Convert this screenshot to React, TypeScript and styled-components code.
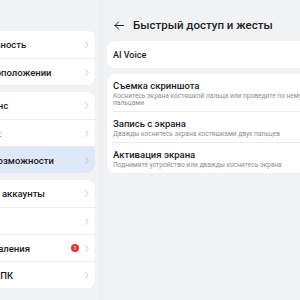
import styled, { createGlobalStyle } from 'styled-components'

interface NavItem {
  label: string
  badge?: number
  active?: boolean
}

interface GestureItem {
  title: string
  hint: string
}

const navGroups: NavItem[][] = [
  [{ label: 'Конфиденциальность' }, { label: 'Данные о местоположении' }],
  [
    { label: 'Цифровой баланс' },
    { label: 'Google Assistant' },
    { label: 'Специальные возможности', active: true },
  ],
  [
    { label: 'Пользователи и аккаунты' },
    { label: 'Google' },
    { label: 'Система и обновления', badge: 1 },
    { label: 'Подключение к ПК' },
  ],
]

const gestures: GestureItem[] = [
  {
    title: 'Съемка скриншота',
    hint: 'Коснитесь экрана костяшкой пальца или проведите по нему тремя пальцами',
  },
  {
    title: 'Запись с экрана',
    hint: 'Дважды коснитесь экрана костяшками двух пальцев',
  },
  {
    title: 'Активация экрана',
    hint: 'Поднимите устройство или дважды коснитесь экрана',
  },
]

const App = () => {
  return (
    <>
      <GlobalStyle />
      <Page>
        <Sidebar>
          {navGroups.map((group, gi) => (
            <NavCard key={gi}>
              {group.map((item) => (
                <NavRow key={item.label} $active={item.active}>
                  <NavLabel>{item.label}</NavLabel>
                  {item.badge ? <Badge>{item.badge}</Badge> : null}
                  <Chevron />
                </NavRow>
              ))}
            </NavCard>
          ))}
        </Sidebar>
        <Split />
        <Content>
          <Header>
            <BackButton>
              <svg width="10" height="9" viewBox="0 0 10 9" fill="none">
                <path
                  d="M9.5 4.5H1M4.5 1L1 4.5L4.5 8"
                  stroke="#222"
                  strokeWidth="1"
                  strokeLinecap="round"
                  strokeLinejoin="round"
                />
              </svg>
            </BackButton>
            <Title>Быстрый доступ и жесты</Title>
          </Header>
          <Card>
            <SimpleRow>AI Voice</SimpleRow>
          </Card>
          <Card>
            {gestures.map((g) => (
              <GestureRow key={g.title}>
                <GestureTitle>{g.title}</GestureTitle>
                <GestureHint>{g.hint}</GestureHint>
              </GestureRow>
            ))}
          </Card>
        </Content>
      </Page>
    </>
  )
}

export default App

const Chevron = () => (
  <ChevronIcon width="4" height="7" viewBox="0 0 4 7" fill="none">
    <path d="M0.6 0.6L3.2 3.5L0.6 6.4" stroke="#c4c5c8" strokeWidth="1" strokeLinecap="round" strokeLinejoin="round" />
  </ChevronIcon>
)

// styled-components
const GlobalStyle = createGlobalStyle`
  html, body {
    margin: 0;
    padding: 0;
    background: #f1f2f4;
    overflow: hidden;
  }
  body {
    font-family: Roboto, "Noto Sans", sans-serif;
    color: #1c1c1e;
  }
`

const Page = styled.div`
  display: flex;
  width: 300px;
  height: 300px;
  overflow: hidden;
`

const Sidebar = styled.div`
  flex-shrink: 0;
  width: 175px;
  margin-left: -80px;
  padding-top: 31px;
  display: flex;
  flex-direction: column;
  gap: 7px;
`

const NavCard = styled.div`
  background: #fff;
  border-radius: 8px;
  overflow: hidden;
`

const NavRow = styled.div<{ $active?: boolean }>`
  box-sizing: border-box;
  height: 27px;
  display: flex;
  align-items: center;
  padding: 0 6px 0 8px;
  background: ${(p) => (p.$active ? '#dde9f8' : 'transparent')};

  & + & {
    border-top: 0.5px solid #ebebed;
  }
`

const NavLabel = styled.span`
  flex: 1;
  font-size: 9.5px;
  font-weight: 500;
  white-space: nowrap;
`

const Badge = styled.span`
  width: 8px;
  height: 8px;
  border-radius: 50%;
  background: #e5322d;
  color: #fff;
  font-size: 6px;
  line-height: 8px;
  text-align: center;
  margin-right: 6px;
`

const ChevronIcon = styled.svg`
  flex-shrink: 0;
`

const Split = styled.div`
  flex-shrink: 0;
  width: 12px;
  display: flex;
  justify-content: center;

  &::before {
    content: '';
    width: 4px;
    background: #eeeff1;
  }
`

const Content = styled.div`
  flex-shrink: 0;
  width: 235px;
  display: flex;
  flex-direction: column;
  gap: 6px;
`

const Header = styled.div`
  box-sizing: border-box;
  height: 35px;
  display: flex;
  align-items: center;
  gap: 9px;
  padding: 15px 0 0 7px;
`

const BackButton = styled.div`
  display: flex;
  align-items: center;
`

const Title = styled.div`
  font-size: 11.5px;
  font-weight: 500;
  color: #222;
`

const Card = styled.div`
  background: #fff;
  border-radius: 8px;
  padding: 0 6px;
`

const SimpleRow = styled.div`
  height: 27px;
  display: flex;
  align-items: center;
  font-size: 9px;
  font-weight: 500;
`

const GestureRow = styled.div`
  display: flex;
  flex-direction: column;
  padding: 6px 0 4px;

  & + & {
    border-top: 0.5px solid #ebebed;
  }
`

const GestureTitle = styled.div`
  font-size: 9.5px;
  line-height: 12px;
  font-weight: 500;
  color: #1c1c1e;
  margin-bottom: 1px;
`

const GestureHint = styled.div`
  font-size: 6.6px;
  line-height: 7px;
  color: #8b8c90;
`
